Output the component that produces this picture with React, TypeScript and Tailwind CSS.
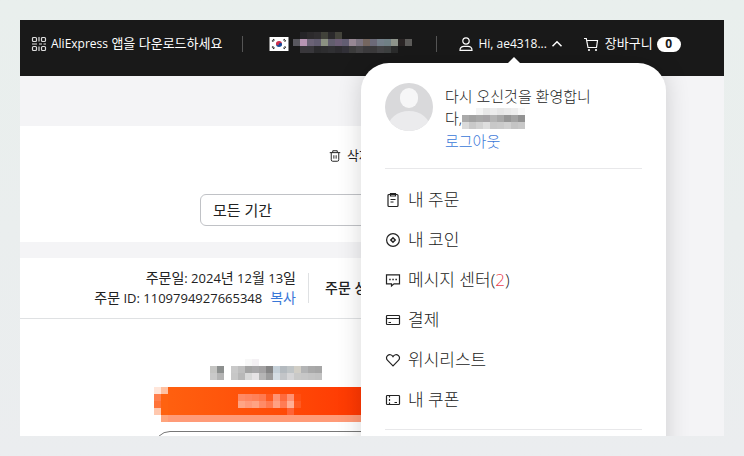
import React from "react";

interface IIcon {
  children: React.ReactNode;
  className?: string;
}

interface IMosaic {
  label: string;
  rows: string[][];
  className?: string;
}

const CELL = 7;

const accountRows = [
  ["", "#252427", "#2c2a2c", "#302e30", "#41423a", "#2a292b", "#43433b", "", "", "", "", "", "", "", "", "", ""],
  ["#58575e", "#b795b3", "#6b6376", "#625d70", "#8b9182", "#625e6e", "#6c5e76", "#625d72", "#968793", "#7b7480", "#74665f", "#6c6a78", "#75808a", "#718186", "#8f958c", "#2a2525", "#5d5c5a"],
  ["", "#39373b", "#38373b", "#2a2a2c", "#2d2d2f", "#303033", "#2c2b2f", "#313037", "#3b3b3b", "#444345", "#3c3b3d", "#3b3a3b", "#434345", "#3e4141", "#2b2c2c", "", ""],
];

const userRows = [
  ["#fff", "#fff", "#f4f4f4", "#e8e8e8", "#ececec", "#e6e6e6", "#eaeaea", "#eeeeee", "#f8f8f8"],
  ["#aaa", "#a2a2a2", "#a8a8a8", "#a6a4a6", "#b4b4b4", "#a8a8a8", "#969696", "#a3a3a3", "#929292"],
  ["#dadada", "#c9c9c9", "#d2d2d2", "#dedede", "#c8c8c8", "#cacaca", "#d0d0d0", "#c4c4c4", "#c8c8c8"],
];

const orderRows = [
  ["", "", "", "", "", "#f8f8f8", "#f4f1f4", "", "", "", "", "", "", "", "", ""],
  ["#c4c4c2", "#8c8f8e", "", "#c9c9c9", "#bebebe", "#a4a4a4", "#a9a8aa", "#a3a2a3", "#858585", "#c5d0d8", "#b4babf", "#bfc4c6", "#d1cec6", "#b3b4b5", "#a9a9a9", "#a6a6a6"],
  ["#c9c9c9", "#b4b4b4", "", "#c7c7c7", "#b8b8b8", "#d9d9d9", "#e6e3e5", "#b5b5b5", "#9c9c9c", "#d5dde3", "#c3c5c8", "#d5d5d7", "#c9c9c8", "#c7c7c7", "#c4c4c4", "#c2c2c2"],
];

const capRows = [
  ["#ffe6da", "#ffc0a0"],
  ["#ff7f4c", "#ff6210"],
  ["#ff7338", "#ff6210"],
  ["#ffc8ae", "#ff6210"],
  ["#fff", "#ffa47c"],
];

const buttonRows = [
  ["#ff8a65", "#ff8560", "#ff8158", "#ff794e", "#ff5a20", "#ff9273", "#ff6a3c", "#ff9172", "#ff4e12"],
  ["#ffa485", "#ff997a", "#ffa283", "#ff8b67", "#ff7a50", "#ffa083", "#ff7c55", "#ffae94", "#ff5a22"],
  ["", "", "", "", "", "", "", "#ff6335", ""],
];

function Icon({ children, className = "size-4" }: IIcon) {
  return (
    <svg
      viewBox="0 0 16 16"
      fill="none"
      stroke="currentColor"
      strokeWidth="1.2"
      className={`${className} shrink-0`}
      aria-hidden="true"
    >
      {children}
    </svg>
  );
}

function Mosaic({ label, rows, className = "" }: IMosaic) {
  const width = rows[0].length * CELL;
  const height = rows.length * CELL;
  return (
    <svg
      width={width}
      height={height}
      role="img"
      aria-label={label}
      shapeRendering="crispEdges"
      className={`${className} shrink-0`}
    >
      {rows.map((row, y) =>
        row.map((fill, x) =>
          fill ? (
            <rect key={`${x}-${y}`} x={x * CELL} y={y * CELL} width={CELL} height={CELL} fill={fill} />
          ) : null
        )
      )}
    </svg>
  );
}

function QrIcon() {
  return (
    <Icon className="size-4 text-[#ddd]">
      <rect x="1.5" y="1.5" width="4" height="4" rx="1" />
      <rect x="1.5" y="10.5" width="4" height="4" rx="1" />
      <rect x="10.5" y="1.5" width="4" height="4" rx="1" />
      <rect x="10.5" y="10.5" width="4" height="4" rx="1" />
      <path d="M8 1v4.500M1 8h5M8 8h3M12.500 8H15M8 10.500V15" />
    </Icon>
  );
}

function Flag() {
  return (
    <svg viewBox="0 0 19 14" className="h-3.5 w-5 shrink-0" role="img" aria-label="대한민국">
      <path fill="#fff" d="M0 0h19v14H0z" />
      <path fill="#d0304a" d="M6.500 7a3 3 0 0 1 6 0z" />
      <path fill="#174a96" d="M6.500 7a3 3 0 0 0 6 0z" />
      <circle cx="8" cy="6.800" r="1.500" fill="#d0304a" />
      <circle cx="11" cy="7.200" r="1.500" fill="#174a96" />
      <path
        stroke="#222"
        strokeWidth="1.800"
        strokeDasharray="1.200 .4"
        d="M2.800 4.500l2-2.200M14.200 2.300l2 2.200M2.800 9.500l2 2.200M14.200 11.700l2-2.200"
      />
    </svg>
  );
}

const menu = [
  {
    label: "내 주문",
    icon: (
      <>
        <rect x="3" y="2.500" width="10" height="12" rx="1" />
        <path d="M5.500 1.500h5v2.500h-5zM5.500 7.500h5M5.500 10h3" />
      </>
    ),
  },
  {
    label: "내 코인",
    icon: (
      <>
        <circle cx="8" cy="8" r="6.400" />
        <path strokeWidth="1.500" d="M8 5.800L10.200 8 8 10.200 5.800 8z" />
      </>
    ),
  },
  {
    label: "메시지 센터",
    count: 2,
    icon: (
      <>
        <path d="M1.500 2.800h13v9H9L6.500 14v-2.200h-5z" />
        <path strokeWidth="1.500" d="M4.200 7.500h1.500M7.300 7.500h1.500M10.400 7.500h1.500" />
      </>
    ),
  },
  {
    label: "결제",
    icon: (
      <>
        <rect x="1.500" y="3.500" width="13" height="9" rx=".8" />
        <path d="M1.500 6.500h13M3.500 10.500H6" />
      </>
    ),
  },
  {
    label: "위시리스트",
    icon: (
      <path d="M8 13.800L2.600 8.400C1 6.800 1.200 4.500 2.700 3.400 4.300 2.200 6.700 2.500 8 4.600c1.300-2.100 3.700-2.400 5.300-1.200 1.500 1.100 1.700 3.400.1 5z" />
    ),
  },
  {
    label: "내 쿠폰",
    icon: (
      <>
        <rect x="1.500" y="3.500" width="13" height="9" rx=".8" />
        <path d="M4.500 4v1.500M4.500 7v2M4.500 10.500V12M9.500 10.500H12" />
      </>
    ),
  },
];

function Header() {
  return (
    <header className="flex h-14 items-center overflow-hidden bg-[#191919] pb-2 pl-[11px] text-[13px] whitespace-nowrap text-white">
      <a href="#app" className="flex items-center gap-1">
        <QrIcon />
        <span>
          <span className="text-xs">AliExpress</span> 앱을 다운로드하세요
        </span>
      </a>
      <span className="ml-5 h-4 w-px shrink-0 bg-[#555]" />
      <button type="button" className="ml-[26px] flex items-center gap-1">
        <Flag />
        <Mosaic label="배송지" rows={accountRows} className="-mt-1" />
      </button>
      <span className="ml-6 h-4 w-px shrink-0 bg-[#555]" />
      <button type="button" aria-expanded="true" className="ml-[21px] flex items-center gap-1">
        <Icon>
          <circle cx="8" cy="5" r="3.200" />
          <path d="M2 14.300c0-2.600 2-4 4-4h4c2 0 4 1.400 4 4z" />
        </Icon>
        <span className="text-xs">Hi, ae4318...</span>
        <Icon className="size-3">
          <path strokeWidth="2" d="M2 11l6-6 6 6" />
        </Icon>
      </button>
      <a href="#cart" className="ml-5 flex items-center gap-1">
        <Icon className="mr-0.5 size-4">
          <path d="M1 2.500h2.300L5 11.500h8.500L14.500 4.500H4" />
          <circle cx="6" cy="14" r=".5" />
          <circle cx="13" cy="14" r=".5" />
        </Icon>
        장바구니
        <span className="flex h-[15px] w-6 items-center justify-center rounded-full bg-white text-xs font-bold text-[#191919]">
          0
        </span>
      </a>
    </header>
  );
}

function AccountMenu() {
  return (
    <aside className="absolute top-[43px] right-[58px] h-[480px] w-[305px] rounded-[28px] bg-white px-6 pt-5 font-light text-[#222] shadow-[0_0_24px_rgba(0,0,0,0.16)]">
      <span className="absolute -top-1.5 left-[147px] size-0 border-x-6 border-b-6 border-x-transparent border-b-white" />
      <div className="flex gap-3 border-b border-[#e8e8ea] pb-[15px]">
        <svg viewBox="0 0 48 48" className="size-12 shrink-0" role="img" aria-label="프로필">
          <clipPath id="avatar">
            <circle cx="24" cy="24" r="24" />
          </clipPath>
          <g clipPath="url(#avatar)">
            <path fill="#d9d9db" d="M0 0h48v48H0z" />
            <rect x="15" y="5" width="18" height="20" rx="9" fill="#f6f6f7" />
            <ellipse cx="24" cy="45" rx="21" ry="17" fill="#ebebed" />
          </g>
        </svg>
        <div className="flex-1 text-[15px] leading-[22px]">
          <p className="pt-0.5">
            다시 오신것을 환영합니
            <br />
            <span className="flex items-center">
              다,
              <Mosaic label="사용자 이름" rows={userRows} />
            </span>
          </p>
          <a href="#logout" className="block leading-6 text-[#3a78d8]">
            로그아웃
          </a>
        </div>
      </div>
      <ul className="border-b border-[#e8e8ea] pt-[11px] pb-[9px] text-[17px]">
        {menu.map((item) => (
          <li key={item.label}>
            <a href="#menu" className="flex h-10 items-center gap-[7px]">
              <Icon>{item.icon}</Icon>
              <span>
                {item.label}
                {item.count ? (
                  <>
                    (<span className="text-[#e8424f]">{item.count}</span>)
                  </>
                ) : null}
              </span>
            </a>
          </li>
        ))}
      </ul>
    </aside>
  );
}

function Orders() {
  return (
    <main className="mr-[70px] text-[13px] whitespace-nowrap text-[#222]">
      <section className="mt-[50px] h-[116px] bg-white pt-5">
        <button type="button" className="ml-[309px] flex h-5 items-center gap-1.5">
          <Icon className="size-3">
            <path strokeWidth="1.300" d="M1 3.500h14M5 3.500V1h6v2.500M3 3.500V13q0 2 2 2h6q2 0 2-2V3.500M6.500 7v4.500M9.500 7v4.500" />
          </Icon>
          삭제됨
        </button>
        <select
          aria-label="기간"
          className="mt-7 ml-[180px] block h-8 w-[300px] appearance-none rounded-md border border-[#c0c2c6] bg-white px-3 text-[15px]"
        >
          <option>모든 기간</option>
        </select>
      </section>
      <section className="mt-4 bg-white">
        <div className="flex h-[61px] items-center border-b border-[#dfe1e3]">
          <div className="w-[276px] text-right text-sm leading-[19px]">
            <p>
              주문일<span className="text-[13px]">: 2024</span>년
              <span className="text-[13px]"> 12</span>월
              <span className="text-[13px]"> 13</span>일
            </p>
            <p>
              주문<span className="text-[13px]"> ID: 1109794927665348</span>
              <button type="button" className="ml-2 text-[#3a78d8]">
                복사
              </button>
            </p>
          </div>
          <span className="mx-3 h-[30px] w-px bg-[#dfe1e3]" />
          <strong className="ml-1 text-sm font-medium">주문 상세정보</strong>
        </div>
        <div className="h-[180px] pt-10 pl-[134px]">
          <Mosaic label="주문 금액" rows={orderRows} className="ml-14 block" />
          <button
            type="button"
            aria-label="주문 버튼"
            className="mt-[7px] flex h-[35px] w-[240px] items-start bg-linear-to-r from-[#ff6210] to-[#ff2e00]"
          >
            <Mosaic label="" rows={capRows} />
            <span className="flex h-full flex-1 border-b-7 border-[#ff9b78] pt-[7px] pl-[70px]">
              <Mosaic label="버튼 글자" rows={buttonRows} />
            </span>
          </button>
          <button
            type="button"
            aria-label="더 보기"
            className="mt-[9px] h-9 w-[240px] rounded-2xl border border-[#777]"
          />
        </div>
      </section>
    </main>
  );
}

export default function App() {
  return (
    <div className="h-screen bg-linear-to-b from-[#e9efed] to-[#ebedef] p-5 font-['Open_Sans','Noto_Sans_CJK_KR',sans-serif]">
      <div className="relative h-full overflow-hidden bg-[#f4f4f6]">
        <Header />
        <Orders />
        <AccountMenu />
      </div>
    </div>
  );
}
